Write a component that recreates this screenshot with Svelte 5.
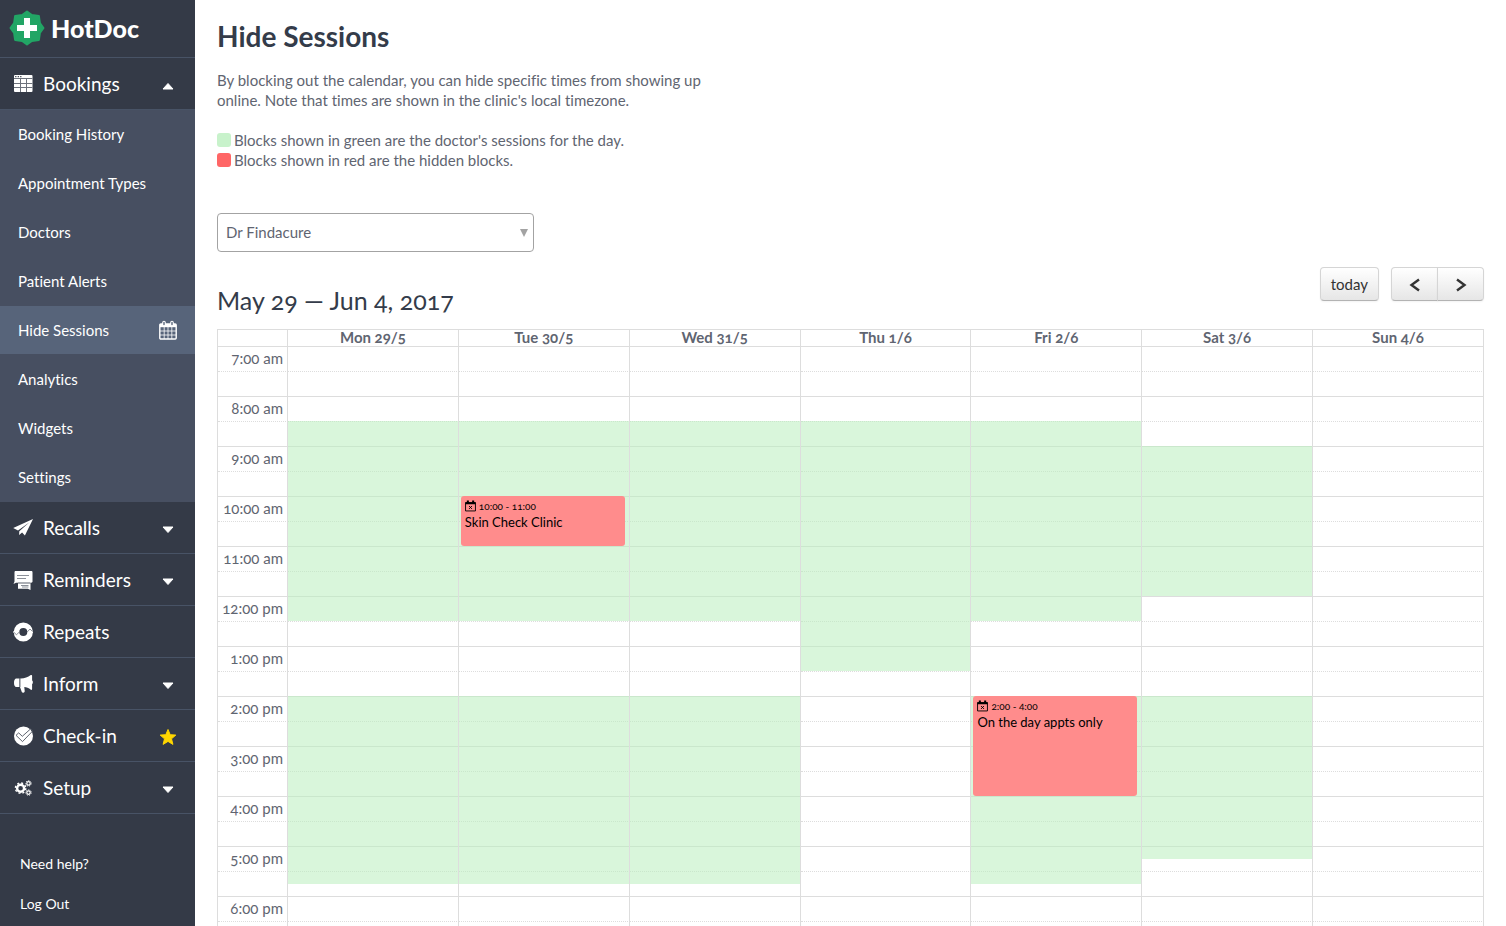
<script lang="ts">
	const SLOT_HEIGHT = 25;
	const DAY_START = 7;

	const submenu = [
		"Booking History",
		"Appointment Types",
		"Doctors",
		"Patient Alerts",
		"Hide Sessions",
		"Analytics",
		"Widgets",
		"Settings"
	];

	const sections = [
		{ name: "Recalls", icon: "plane", mark: "down" },
		{ name: "Reminders", icon: "messages", mark: "down" },
		{ name: "Repeats", icon: "repeat", mark: "" },
		{ name: "Inform", icon: "horn", mark: "down" },
		{ name: "Check-in", icon: "check", mark: "star" },
		{ name: "Setup", icon: "gears", mark: "down" }
	];

	const days = [
		{ label: "Mon 29/5", sessions: [[8.5, 12.5], [14, 17.75]], hidden: [] },
		{
			label: "Tue 30/5",
			sessions: [[8.5, 12.5], [14, 17.75]],
			hidden: [{ from: 10, to: 11, time: "10:00 - 11:00", title: "Skin Check Clinic" }]
		},
		{ label: "Wed 31/5", sessions: [[8.5, 12.5], [14, 17.75]], hidden: [] },
		{ label: "Thu 1/6", sessions: [[8.5, 13.5]], hidden: [] },
		{
			label: "Fri 2/6",
			sessions: [[8.5, 12.5], [14, 17.75]],
			hidden: [{ from: 14, to: 16, time: "2:00 - 4:00", title: "On the day appts only" }]
		},
		{ label: "Sat 3/6", sessions: [[9, 12], [14, 17.25]], hidden: [] },
		{ label: "Sun 4/6", sessions: [], hidden: [] }
	];

	const slots = Array.from({ length: 24 }, (_, i) => {
		const hour = DAY_START + Math.floor(i / 2);
		const half = i % 2 === 1;
		const label = half ? "" : `${hour > 12 ? hour - 12 : hour}:00 ${hour < 12 ? "am" : "pm"}`;
		return { half, label };
	});

	let active = $state("Hide Sessions");
	let bookingsOpen = $state(true);
	let doctor = $state("Dr Findacure");

	function place(from: number, to: number) {
		const top = (from - DAY_START) * 2 * SLOT_HEIGHT - 1;
		const height = (to - from) * 2 * SLOT_HEIGHT;
		return `top: ${Math.round(top)}px; height: ${Math.round(height)}px`;
	}
</script>

{#snippet caret(up: boolean)}
	<svg class="caret" viewBox="0 0 12 8" aria-hidden="true">
		<path d={up ? "M1 7 6 1.5 11 7z" : "M1 1 6 6.500 11 1z"} fill="#fff" stroke="#fff" stroke-linejoin="round" />
	</svg>
{/snippet}

{#snippet icon(name: string)}
	<svg class="icon" viewBox="0 0 20 20" aria-hidden="true">
		{#if name === "table"}
			<path fill="#fff" d="M2 1h16.500a1 1 0 0 1 1 1v15a1 1 0 0 1-1 1H2a1 1 0 0 1-1-1V2a1 1 0 0 1 1-1z" />
			<path stroke="#6d727c" fill="none" d="M1 4.500h18.500M1 9.500h18.500M1 13.500h18.500M7.500 5v13M13.500 5v13" />
			<path stroke="#343a47" stroke-width="1.200" d="M2.200 2.600h1.200M4.700 2.600h1.200M7.200 2.600h1.200" />
		{:else if name === "plane"}
			<path fill="#fff" d="M20 1 .2 10l4.800 2.400L16.500 4.300 6.300 13.300l-.2 3.800 3-2.500 2.800 2.900z" />
		{:else if name === "messages"}
			<path fill="#fff" d="M2.700 1h15.600c.7 0 1.200.5 1.200 1.200v9.300c0 .7-.5 1.200-1.200 1.200H3L.5 14l1-2.600V2.200C1.500 1.500 2 1 2.700 1z" />
			<path fill="#fff" d="M5 13.300h12.500V20l-2.700-1.300H5z" />
			<path stroke="#8b9099" d="M4 5.500h12M4 8.500h9M5 13h12M8 15.500h7.500M9 17h6.500" />
		{:else if name === "repeat"}
			<circle cx="10.300" cy="10" r="6.800" fill="none" stroke="#fff" stroke-width="5.600" />
			<path fill="#fff" d="m-.2 10 3.500-2.500v4.800zM20.800 10 17.300 7.500v4.800z" />
			<path stroke="#6d727c" stroke-width=".8" fill="none" d="m.8 10.200 2.700 2.600L6.300 10M19.600 9.600 17 7l-2.800 3" />
		{:else if name === "horn"}
			<path fill="#fff" d="M3 4.500h3.300v8.500H3.500C1.700 12.700 1 11 1 8.900s.7-4.200 2-4.400zM7.300 4.500c4.200.1 7.400-1.200 10.500-3.400.8-.4 1.300 0 1.300.6v4.900c1 .2 1 3.300 0 3.500v5c0 .7-.6 1-1.200.6-2.300-1.700-4.400-2.400-6.600-2.700l.4 4c.1.700-.2 1.200-.8 1.500-.9.400-1.700.2-2.100-.6L7 13h.3z" />
			<path stroke="#9a9ea6" stroke-width=".8" d="M6.800 4.500V13" />
		{:else if name === "check"}
			<circle cx="10.500" cy="10" r="9.500" fill="#fff" />
			<path fill="none" stroke="#4d5360" stroke-width=".9" d="m3 9.300 2.700-2.400 3.600 3.400 8.400-7.500 2 2.200L9.500 15.600z" />
		{:else if name === "gears"}
			<g fill="none" stroke="#fff">
				<circle cx="7.600" cy="10.200" r="3.500" stroke-width="2.400" />
				<circle cx="7.600" cy="10.200" r="5.200" stroke-width="1.400" stroke-dasharray="2 2.080" />
				<circle cx="15.500" cy="5.400" r="1.700" stroke-width="1.200" />
				<circle cx="15.500" cy="5.400" r="2.700" stroke-width="1" stroke-dasharray="1.200 1.220" />
				<circle cx="15.500" cy="14.600" r="1.700" stroke-width="1.200" />
				<circle cx="15.500" cy="14.600" r="2.700" stroke-width="1" stroke-dasharray="1.200 1.220" />
			</g>
		{/if}
	</svg>
{/snippet}

<div class="layout">
	<aside>
		<a class="logo" href="#home">
			<svg viewBox="0 0 36 36" aria-hidden="true">
				<path fill="#22a565" stroke="#22a565" stroke-width="2" stroke-linejoin="round" d="m18 1.500 4.800 3.600 7.100 1 1 7.100 3.600 4.800-3.600 4.800-1 7.100-7.100 1-4.800 3.600-4.800-3.600-7.100-1-1-7.100L1.500 18l3.600-4.800 1-7.100 7.100-1z" />
				<path fill="#fff" d="M15 8h6v7h7v6h-7v7h-6v-7H8v-6h7z" />
			</svg>
			<span>HotDoc</span>
		</a>

		<nav>
			<button class="section" onclick={() => (bookingsOpen = !bookingsOpen)}>
				{@render icon("table")}
				<span>Bookings</span>
				{@render caret(bookingsOpen)}
			</button>
			{#if bookingsOpen}
				<div class="submenu">
					{#each submenu as item}
						<a href="#bookings" class:active={item === active} onclick={() => (active = item)}>
							<span>{item}</span>
							{#if item === active}
								<svg class="calendar-icon" viewBox="0 0 18 20" aria-hidden="true">
									<rect x=".8" y="4" width="16.400" height="15" rx="1" fill="none" stroke="#fff" stroke-width="1.400" />
									<path fill="#fff" d="M1 4h16v3.200H1z" />
									<path stroke="#fff" stroke-width=".8" d="M5.200 7v12M9 7v12M12.800 7v12M1 11h16M1 15h16" />
									<path stroke="#fff" stroke-width="3.600" stroke-linecap="round" d="M5 2.500v2M13 2.500v2" />
									<path stroke="#57647a" stroke-width="1.400" stroke-linecap="round" d="M5 2.500v2M13 2.500v2" />
								</svg>
							{/if}
						</a>
					{/each}
				</div>
			{/if}

			{#each sections as section}
				<button class="section">
					{@render icon(section.icon)}
					<span>{section.name}</span>
					{#if section.mark === "down"}
						{@render caret(false)}
					{:else if section.mark === "star"}
						<svg class="star" viewBox="0 0 18 18" aria-hidden="true">
							<path fill="#ffd600" stroke="#ffd600" stroke-linejoin="round" d="m9 1.500 2.200 5.200 5.600.4-4.300 3.700 1.400 5.600L9 13.400l-4.900 3 1.400-5.600L1.200 7.100l5.600-.4z" />
						</svg>
					{/if}
				</button>
			{/each}
		</nav>

		<div class="extra">
			<a href="#help">Need help?</a>
			<a href="#logout">Log Out</a>
		</div>
	</aside>

	<main>
		<h1>Hide Sessions</h1>
		<p class="intro">
			By blocking out the calendar, you can hide specific times from showing up online. Note that
			times are shown in the clinic's local timezone.
		</p>
		<ul class="legend">
			<li><i class="green"></i>Blocks shown in green are the doctor's sessions for the day.</li>
			<li><i class="red"></i>Blocks shown in red are the hidden blocks.</li>
		</ul>

		<div class="doctor">
			<select bind:value={doctor} aria-label="Doctor">
				<option>Dr Findacure</option>
			</select>
			<svg viewBox="0 0 8 8" aria-hidden="true"><path fill="#a3a3a3" d="M0 0h8L4 8z" /></svg>
		</div>

		<div class="toolbar">
			<h2>May 29 — Jun 4, 2017</h2>
			<div class="buttons">
				<button class="today">today</button>
				<div class="pair">
					<button aria-label="Previous week">
						<svg viewBox="0 0 12 14" aria-hidden="true"><path d="M10 1.500 2.500 7l7.500 5.500" /></svg>
					</button>
					<button aria-label="Next week">
						<svg viewBox="0 0 12 14" aria-hidden="true"><path d="M2 1.500 9.500 7 2 12.500" /></svg>
					</button>
				</div>
			</div>
		</div>

		<table>
			<thead>
				<tr>
					<th class="axis"></th>
					{#each days as day}
						<th>{day.label}</th>
					{/each}
				</tr>
			</thead>
			<tbody>
				{#each slots as slot, i}
					<tr class:hour={!slot.half}>
						<td class="axis">{slot.label}</td>
						{#each days as day}
							<td class:first={i === 0}>
								<!-- blocks hang from the first slot and are sized by time -->
								{#if i === 0}
									{#each day.sessions as [from, to]}
										<div class="session" style={place(from, to)}></div>
									{/each}
									{#each day.hidden as block}
										<div class="hidden-block" style={place(block.from, block.to)}>
											<div class="time">
												<svg viewBox="0 0 12 12" aria-hidden="true">
													<path fill="none" stroke="#000" d="M.6 2.300h10.800v9.100H.6z" />
													<path fill="#000" d="M.5 2h11v2H.5zM2 0h2.200v3H2zM7.800 0H10v3H7.800z" />
													<path stroke="#000" d="m4.400 6 3.200 3.200M7.600 6 4.400 9.200" />
												</svg>
												{block.time}
											</div>
											<div class="title">{block.title}</div>
										</div>
									{/each}
								{/if}
							</td>
						{/each}
					</tr>
				{/each}
			</tbody>
		</table>
	</main>
</div>

<style>
	:global(body) {
		margin: 0;
	}

	.layout {
		display: flex;
		height: 100vh;
		overflow: hidden;
		font-family: Lato, "Open Sans", sans-serif;
		font-size: 15px;
		line-height: 20px;
		font-variant-numeric: oldstyle-nums;
		font-variant-ligatures: no-common-ligatures;
		color: #5f6571;
	}

	* {
		box-sizing: border-box;
	}

	button,
	select {
		font: inherit;
		font-variant-numeric: inherit;
		font-variant-ligatures: inherit;
		cursor: pointer;
	}

	aside {
		flex: 0 0 195px;
		background: #343a47;
		color: #fff;
	}

	aside a {
		color: #fff;
		text-decoration: none;
	}

	.logo {
		display: flex;
		align-items: center;
		gap: 6px;
		height: 58px;
		padding: 0 9px 2px;
		border-bottom: 1px solid #485366;
		font-size: 25px;
		font-weight: 900;
	}

	.logo svg {
		width: 36px;
		height: 36px;
	}

	.section {
		display: flex;
		align-items: center;
		width: 100%;
		height: 52px;
		padding: 0 18px 0 13px;
		border: 0;
		border-bottom: 1px solid #485366;
		background: none;
		color: #fff;
		font-size: 19px;
		text-align: left;
	}

	.section span {
		flex: 1;
		margin-left: 10px;
	}

	.icon {
		width: 20px;
		height: 20px;
	}

	.caret {
		width: 12px;
		height: 8px;
		margin: 4px 3px 0 0;
	}

	.star {
		width: 18px;
		height: 18px;
		margin-top: 2px;
	}

	.submenu {
		background: #474f61;
	}

	.submenu a {
		display: flex;
		align-items: center;
		justify-content: space-between;
		height: 49px;
		padding: 0 18px 1px;
		border-bottom: 1px solid #474f61;
	}

	.submenu a.active {
		background: #57647a;
	}

	.calendar-icon {
		width: 18px;
		height: 20px;
	}

	.extra {
		padding: 30px 20px;
		font-size: 14px;
		line-height: 40px;
	}

	.extra a {
		display: block;
	}

	main {
		flex: 1;
		min-width: 0;
		padding: 19px 22px 0;
	}

	h1 {
		margin: 0 0 17px;
		color: #343c4a;
		font-size: 28px;
		line-height: 34px;
	}

	.intro {
		max-width: 520px;
		margin: 0 0 20px;
	}

	.legend {
		margin: 0 0 43px;
		padding: 0;
		list-style: none;
	}

	.legend li {
		display: flex;
		align-items: center;
		gap: 3px;
	}

	.legend i {
		width: 14px;
		height: 14px;
		border-radius: 3px;
	}

	.green {
		background: #c8f2cb;
	}

	.red {
		background: #ff6666;
	}

	.doctor {
		position: relative;
		width: 25%;
		margin-bottom: 15px;
	}

	.doctor select {
		display: block;
		width: 100%;
		height: 39px;
		padding: 0 8px 2px;
		border: 1px solid #a3a3a3;
		border-radius: 4px;
		background: #fff;
		color: #5f6571;
		appearance: none;
	}

	.doctor svg {
		position: absolute;
		top: 16px;
		right: 6px;
		width: 8px;
		height: 8px;
		pointer-events: none;
	}

	.toolbar {
		display: flex;
		justify-content: space-between;
		height: 62px;
	}

	h2 {
		margin: 17px 0 0;
		color: #343c4a;
		font-size: 25px;
		font-weight: normal;
		line-height: 32px;
	}

	.buttons {
		display: flex;
		gap: 12px;
	}

	.buttons button {
		height: 34px;
		padding: 0 10px 1px;
		border: 1px solid #d5d5d5;
		border-bottom-color: #b3b3b3;
		border-radius: 4px;
		background: linear-gradient(#fff, #e6e6e6);
		box-shadow: 0 1px 2px rgba(0, 0, 0, 0.05);
		color: #333;
	}

	.pair {
		display: flex;
	}

	.pair button {
		display: flex;
		align-items: center;
		justify-content: center;
		width: 47px;
		padding: 2px 0 0;
	}

	.pair button:first-child {
		border-radius: 4px 0 0 4px;
	}

	.pair button:last-child {
		margin-left: -1px;
		border-radius: 0 4px 4px 0;
	}

	.pair svg {
		width: 12px;
		height: 14px;
		fill: none;
		stroke: #333;
		stroke-width: 2.4;
	}

	table {
		width: 100%;
		table-layout: fixed;
		border-collapse: separate;
		border-spacing: 0;
		border: solid #ddd;
		border-width: 1px 0 0 1px;
	}

	th,
	td {
		padding: 0;
		border: solid #ddd;
		border-width: 0 1px 1px 0;
		vertical-align: top;
	}

	th {
		height: 17px;
		line-height: 15px;
	}

	td {
		height: 25px;
		line-height: 23px;
	}

	.hour td {
		border-bottom-style: dotted;
	}

	.axis {
		width: 70px;
		padding-right: 4px;
		text-align: right;
		white-space: nowrap;
	}

	.first {
		position: relative;
	}

	.session {
		position: absolute;
		left: 0;
		right: 0;
		background: rgba(186, 239, 190, 0.55);
	}

	.hidden-block {
		position: absolute;
		left: 2px;
		right: 4px;
		padding: 2px 4px;
		border-radius: 3px;
		background: #ff8c8c;
		color: #000;
		font-size: 13px;
		line-height: 16px;
	}

	.time {
		display: flex;
		align-items: center;
		gap: 3px;
		font-size: 10px;
	}

	.time svg {
		width: 11px;
		height: 12px;
	}
</style>
